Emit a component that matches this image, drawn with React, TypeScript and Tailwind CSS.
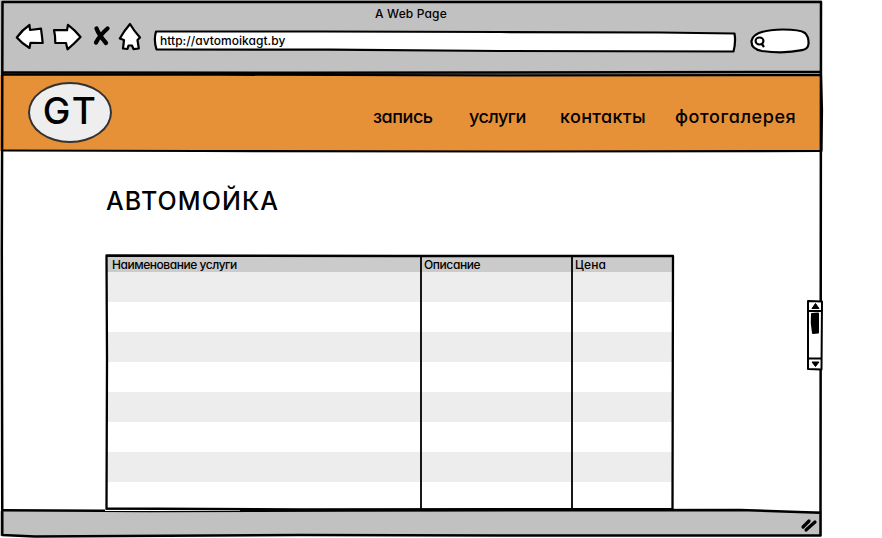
import React from "react";

const stripes = ["bg-[#ededed]", "bg-white", "bg-[#ededed]", "bg-white", "bg-[#ededed]", "bg-white", "bg-[#ededed]", "bg-white"];

function Toolbar() {
  return (
    <div className="h-[75px] bg-[#c1c1c1]">
      <div className="flex h-[27px] justify-center pt-[5px] text-[12px] leading-[18px] tracking-[0.15px]">A Web Page</div>
      <div className="flex">
        <svg className="h-[30px] w-[138px] shrink-0 ml-[12px] -mt-[6px]" viewBox="12 21 138 30" fill="white" stroke="black" strokeWidth="2.200" strokeLinejoin="round">
          <path d="M16.800 37.500 Q22 30 29.500 25 L30 30 L41 28.700 Q42 36 42.700 43 L30.500 42.800 L29.500 48 Q22 43.500 16.800 37.500Z" />
          <path d="M54 30 L67 30.200 L68 24.800 Q75 30 80.500 37 Q74 44 67.500 49.300 L66 43 L55.300 43 L55 36Z" />
          <path d="M96.500 28.500 Q99 35 106 43 M107.500 28.500 Q100 35 96 42.500" strokeWidth="4.300" strokeLinecap="round" />
          <path d="M130 24 Q134 31 140 37.500 L137.500 40 L138.800 48.500 L133.500 49.200 L132 45.500 L128.500 45.500 L127.500 49 L123 48.500 L124 40 L119.800 38.500 Q124 31 130 24Z" />
        </svg>
        <div className="flex h-[18px] w-[575px] mt-[5px] ml-[5px] items-center pl-[5px] text-[12px] leading-[18px] tracking-[0.03px] relative">
          <svg className="absolute -left-[2px] -top-[2px]" width="584" height="24" viewBox="153 30 584 24" fill="white" stroke="black" strokeWidth="2.200" strokeLinejoin="round">
            <path d="M156 31.500 L320 31.500 L500 32 L660 32.500 L734.500 33.500 Q736 42 733.500 51.500 L500 51 L330 49.700 L156.500 49.500 Q153.500 40 156 31.500Z" />
          </svg>
          <span className="relative">http://avtomoikagt.by</span>
        </div>
        <svg className="ml-[19px] mt-[1px]" width="62" height="27" viewBox="749 28 62 27" fill="white" stroke="black" strokeWidth="2.200">
          <path d="M751.500 41 Q753 30 783 29.500 Q800 29.500 805 33 Q809 37 808.500 44 Q808 49 802 50.200 Q784 54 762 51 Q751 49 751.500 41Z" />
          <ellipse cx="759.500" cy="41" rx="3.900" ry="3.500" />
          <path d="M761.500 43.500 L764 47" />
        </svg>
      </div>
    </div>
  );
}

function Header() {
  return (
    <header className="flex h-[76px] bg-[#e69138] pl-[28px]">
      <div className="flex h-[61px] w-[84px] mt-[7px] items-center justify-center rounded-[50%] border-2 border-[#333] bg-[#eee] text-[37px] leading-none tracking-[2.5px] pb-[4px] pl-[1px] font-[450]">GT</div>
      <nav className="flex pt-[29px] text-[18px] leading-[26px] font-[450]">
        <span className="ml-[261px] w-[96px] tracking-[-0.45px]">запись</span>
        <span className="w-[91px] tracking-[-0.55px]">услуги</span>
        <span className="w-[115px] tracking-[0.35px]">контакты</span>
        <span className="tracking-[0.6px]">фотогалерея</span>
      </nav>
    </header>
  );
}

function ServiceTable() {
  return (
    <div className="mt-[37px] ml-[106px] w-[567px]">
      <div className="grid h-[17px] grid-cols-[315px_151px_101px] bg-[#cbcbcb] text-[12px] leading-[20px] font-[450]">
        <span className="pl-[6px] tracking-[-0.45px]">Наименование услуги</span>
        <span className="pl-[3px] tracking-[-0.4px]">Описание</span>
        <span className="pl-[3px] tracking-[0.15px]">Цена</span>
      </div>
      {stripes.map((tone, i) => (
        <div key={i} className={"h-[30px] last:h-[28px] " + tone} />
      ))}
    </div>
  );
}

function SketchLines() {
  return (
    <svg className="absolute inset-0" width="882" height="538" viewBox="0 0 882 538" fill="none" stroke="black" strokeWidth="2.500" strokeLinejoin="round">
      <path d="M2.500 2 L821 2 L820.500 535.500 L500 535.500 L300 535 L35 536.500 L2.300 535 L1.800 250 Z" />
      <path d="M2 72.500 L300 72.700 L821 72" strokeWidth="2.500" />
      <path d="M2 74.700 L220 74.700 L500 75.300 L821 75 L822 110 L821.500 151 L520 151.500 L200 151 L2 150.500" strokeWidth="2.200" />
      <path d="M2 510.200 L150 511 L350 510.500 L740 510 L820 512.800" />
      <path d="M105 510.500 L240 510.500" stroke="white" strokeWidth="1" />
      <path d="M106.500 255.500 L400 256 L673 256 L672.500 509 L300 509.500 L106.500 508.500 L107 360 Z" strokeWidth="2.300" />
      <path d="M421 256 L421 509 M572 256 L572 510" strokeWidth="1.800" />
      <path d="M808 301 L822 301.500 L821.500 369.500 L808 369 Z" fill="white" strokeWidth="2" />
      <path d="M808 311 H822 M808 358.500 H822" strokeWidth="2" />
      <path d="M815.500 303.500 L819 308.500 H812Z M812 362 H819 L815.500 366.500Z" fill="black" strokeWidth="1" />
      <path d="M812 314 L818 313.500 L818 332.500 L813 333 Q811 323 812 314Z" fill="black" strokeWidth="2" />
      <path d="M803 527 L809 521 M806 530 L815 522" strokeWidth="3.200" strokeLinecap="round" />
    </svg>
  );
}

export default function App() {
  return (
    <div className="relative h-[538px] w-[882px] overflow-hidden bg-white font-['Inter','Open_Sans',sans-serif] font-[450] text-black [font-feature-settings:'cv11']">
      <div className="flex h-[537px] w-[822px] flex-col">
        <Toolbar />
        <Header />
        <main className="h-[360px] bg-white">
          <h1 className="ml-[106px] pt-[33px] text-[25px] leading-[34px] tracking-[1.1px] font-[450]">АВТОМОЙКА</h1>
          <ServiceTable />
        </main>
        <footer className="h-[25px] bg-[#c1c1c1]" />
      </div>
      <SketchLines />
    </div>
  );
}
